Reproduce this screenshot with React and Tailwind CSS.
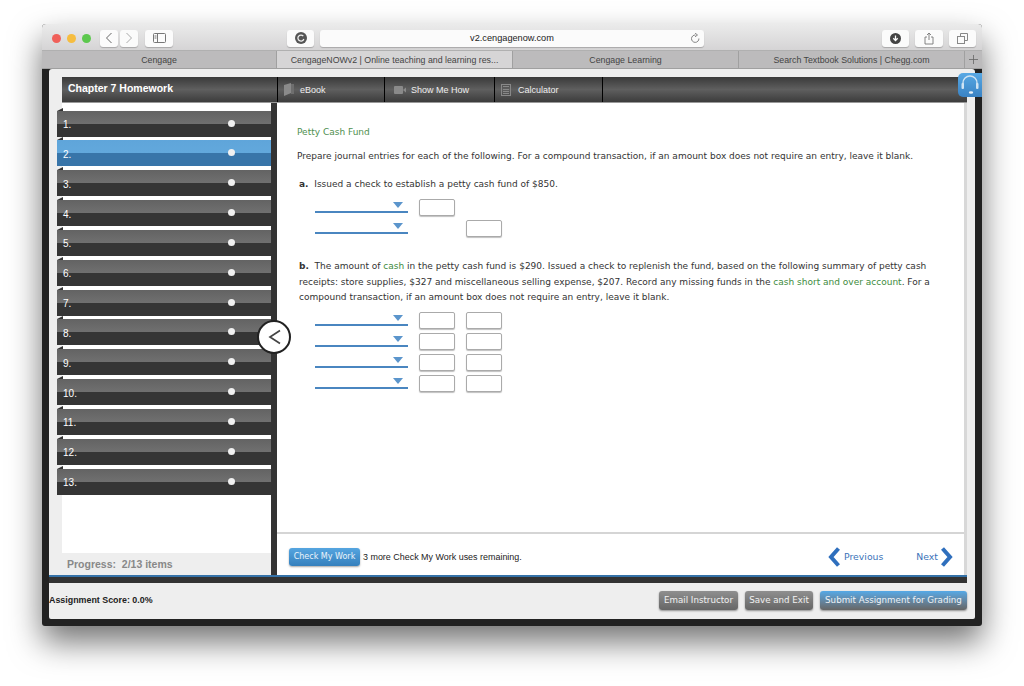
import React from "react";

const sans = "font-['Liberation_Sans',Arial,sans-serif]";
const verdana = "font-['DejaVu_Sans',Verdana,sans-serif]";

function ToolBtn({ w, className = "", children }) {
  return (
    <div className={`h-[17px] rounded-[3px] bg-[#fbfbfb] shadow-[0_1px_1px_rgba(0,0,0,0.22)] flex items-center justify-center ${w} ${className}`}>
      {children}
    </div>
  );
}

function Tab({ w, active, children, border = true }) {
  return (
    <div className={`${w} h-full flex items-center justify-center pt-[2px] text-[8.8px] text-[#444] ${sans} ${border ? "border-r border-[#a0a0a0]" : ""} ${active ? "bg-[#d6d5d6]" : "bg-[#bcbbbc]"}`}>
      {children}
    </div>
  );
}

function Row({ n, active }) {
  return (
    <div className="relative h-[26px] mb-[3.85px] mt-0 w-[214px]">
      <div className="absolute -top-[3px] left-0 w-0 h-0 border-b-[3px] border-b-[#333] border-l-[6px] border-l-transparent" />
      <div className={`h-[13px] bg-gradient-to-b ${active ? "from-[#5fa5da] to-[#62a8dc]" : "from-[#636363] to-[#707070]"}`} />
      <div className={`h-[13px] ${active ? "bg-[#3875a9]" : "bg-[#353535]"}`} />
      <div className="absolute inset-0 pl-[6px] pt-[7.5px] text-[10px] leading-[14px] text-white font-['Liberation_Sans',Arial,sans-serif]">{n}.</div>
      <div className="absolute left-[171px] top-[9px] w-[7px] h-[7px] rounded-full bg-[#f0f0f0]" />
    </div>
  );
}

function HeadTab({ w, icon, label }) {
  return (
    <div className={`${w} h-full flex items-center border-r border-black text-[9px] text-[#eee] ${sans}`}>
      {icon}
      <span className="pt-[2px]">{label}</span>
    </div>
  );
}

function Amount({ className = "" }) {
  return <div className={`w-[36px] h-[17px] rounded-[2px] border border-[#aaa] bg-white shadow-[0_1px_1px_rgba(0,0,0,0.25)] ${className}`} />;
}

function Select() {
  return (
    <div className="relative w-[93px] h-[14px] border-b-2 border-[#4a86c0]">
      <div className="absolute right-[5px] top-[3px] w-0 h-0 border-l-[5.5px] border-r-[5.5px] border-t-[6px] border-l-transparent border-r-transparent border-t-[#5b95cc]" />
    </div>
  );
}

function EntryRow({ first = true, second = true }) {
  return (
    <div className="flex h-[17px] mb-[4px] pl-[18px]">
      <Select />
      {first ? <Amount className="ml-[11px]" /> : <div className="w-[36px] ml-[11px]" />}
      {second ? <Amount className="ml-[11px]" /> : null}
    </div>
  );
}

function GrayBtn({ w, children, className = "" }) {
  return (
    <div className={`h-[19px] ${w} rounded-[3px] flex items-center justify-center pt-[1px] text-[8.7px] text-white/90 bg-gradient-to-b from-[#8f8f8f] to-[#666] shadow-[0_1px_2px_rgba(0,0,0,0.4)] ${verdana} ${className}`}>
      {children}
    </div>
  );
}

export default function App() {
  return (
    <div className="w-[1024px] h-[686px] bg-white overflow-hidden pt-[24px] pl-[42px] relative">
      <div className="w-[940px] h-[602px] rounded-t-[4px] rounded-b-[3px] flex flex-col shadow-[0_16px_32px_rgba(0,0,0,0.55)] relative bg-[#222]">
        {/* Title bar */}
        <div className="h-[27px] shrink-0 rounded-t-[4px] pt-[2px] bg-gradient-to-b from-[#ebebeb] to-[#d5d4d5] border-b border-[#b0b0b0] flex items-center relative">
          <div className="flex items-center gap-[6px] ml-[10px] w-[48px]">
            <div className="w-[9px] h-[9px] rounded-full bg-[#f0605a]" />
            <div className="w-[9px] h-[9px] rounded-full bg-[#f6bd3f]" />
            <div className="w-[9px] h-[9px] rounded-full bg-[#5cc84d]" />
          </div>
          <ToolBtn w="w-[18px]">
            <svg width="8" height="12" viewBox="0 0 8 12"><path d="M6.5 1 L1.5 6 L6.5 11" fill="none" stroke="#666" strokeWidth="1" /></svg>
          </ToolBtn>
          <ToolBtn w="w-[18px]" className="ml-[2px]">
            <svg width="8" height="12" viewBox="0 0 8 12"><path d="M1.5 1 L6.5 6 L1.5 11" fill="none" stroke="#aaa" strokeWidth="1" /></svg>
          </ToolBtn>
          <ToolBtn w="w-[28px]" className="ml-[7px]">
            <svg width="13" height="10" viewBox="0 0 13 10"><rect x="0.5" y="0.5" width="12" height="9" rx="1" fill="none" stroke="#777" /><path d="M4.5 0.5V9.5M1.5 3h2M1.5 5h2" stroke="#777" strokeWidth="1" /></svg>
          </ToolBtn>
          <ToolBtn w="w-[27px]" className="ml-[114px]">
            <div className="w-[12px] h-[12px] rounded-full bg-[#555] flex items-center justify-center">
              <svg width="8" height="8" viewBox="0 0 8 8"><path d="M6.3 2.2 A3 3 0 1 0 6.8 5" fill="none" stroke="#eee" strokeWidth="1.3" /></svg>
            </div>
          </ToolBtn>
          <ToolBtn w="w-[384px]" className={`ml-[6px] relative pt-[2px] text-[9.2px] text-[#222] ${sans}`}>
            <span>v2.cengagenow.com</span>
            <svg className="absolute right-[4px] top-[3px]" width="10" height="11" viewBox="0 0 10 11"><path d="M5.5 2 A3.7 3.7 0 1 0 8.9 5.5" fill="none" stroke="#777" strokeWidth="0.9" /><path d="M5 0 L7.5 2 L5 3.8" fill="none" stroke="#777" strokeWidth="0.9" /></svg>
          </ToolBtn>
          <ToolBtn w="w-[27px]" className="ml-[178px]">
            <div className="w-[11px] h-[11px] rounded-full bg-[#444] flex items-center justify-center">
              <svg width="7" height="7" viewBox="0 0 7 7"><path d="M3.5 0.5V5M1.3 3.2L3.5 5.6L5.7 3.2" fill="none" stroke="#fff" strokeWidth="1.3" /></svg>
            </div>
          </ToolBtn>
          <ToolBtn w="w-[28px]" className="ml-[6px]">
            <svg width="10" height="13" viewBox="0 0 10 13"><path d="M3 5H1V12H9V5H7M5 8V1M3 3L5 1L7 3" fill="none" stroke="#777" strokeWidth="0.9" /></svg>
          </ToolBtn>
          <ToolBtn w="w-[27px]" className="ml-[6px]">
            <svg width="11" height="11" viewBox="0 0 11 11"><rect x="0.5" y="3.5" width="7" height="7" fill="none" stroke="#888" /><path d="M3.5 3.5V0.5H10.5V7.5H7.5" fill="none" stroke="#888" /></svg>
          </ToolBtn>
        </div>

        {/* Browser tabs */}
        <div className="h-[18px] shrink-0 flex border-b border-[#a0a0a0]">
          <Tab w="w-[235px]">Cengage</Tab>
          <Tab w="w-[236px]" active>CengageNOWv2 | Online teaching and learning res...</Tab>
          <Tab w="w-[226px]">Cengage Learning</Tab>
          <Tab w="w-[226px]">Search Textbook Solutions | Chegg.com</Tab>
          <div className="flex-1 bg-[#bcbbbc] flex items-center justify-center">
            <svg width="9" height="9" viewBox="0 0 9 9"><path d="M4.5 0V9M0 4.5H9" stroke="#666" strokeWidth="0.8" /></svg>
          </div>
        </div>

        {/* Page */}
        <div className="flex-1 min-h-0 mx-[7px] mb-[7px] rounded-b-[2px] bg-[#eeeeee] flex flex-col rounded-t-[3px]">
          <div className="h-[8px] shrink-0" />
          {/* Assignment header */}
          <div className="h-[26px] shrink-0 ml-[13px] mr-[8px] flex bg-gradient-to-b from-[#3a3a3a] via-[#5f5f5f] to-[#3c3c3c] border-b border-[#999]">
            <div className={`w-[216px] h-full border-r border-black pl-[6px] pt-[4px] text-[10.5px] leading-[14px] font-bold text-white ${sans}`}>Chapter 7 Homework</div>
            <HeadTab
              w="w-[107px]"
              label="eBook"
              icon={
                <svg className="ml-[6px] mr-[6px]" width="10" height="13" viewBox="0 0 10 13"><path d="M0 2L7 0V10L0 13Z" fill="#8a8a8a" /><path d="M7 1H10V11L7 11Z" fill="#6e6e6e" /></svg>
              }
            />
            <HeadTab
              w="w-[110px]"
              label="Show Me How"
              icon={
                <svg className="ml-[9px] mr-[5px]" width="12" height="8" viewBox="0 0 12 8"><rect width="9" height="8" rx="1" fill="#8a8a8a" /><path d="M9 4L12 1.5V6.5Z" fill="#8a8a8a" /></svg>
              }
            />
            <HeadTab
              w="w-[108px]"
              label="Calculator"
              icon={
                <svg className="ml-[6px] mr-[7px]" width="10" height="12" viewBox="0 0 10 12"><rect x="0.5" y="0.5" width="9" height="11" fill="none" stroke="#888" /><path d="M2 2.5H8M2 5.5H8M2 7.5H8M2 9.5H8" stroke="#888" /></svg>
              }
            />
          </div>

          {/* Middle */}
          <div className="h-[472px] shrink-0 flex">
            {/* Sidebar */}
            <div className="w-[222px] shrink-0 relative flex flex-col">
              <div className="ml-[13px] flex-1 bg-white" />
              <div className={`h-[22px] shrink-0 pl-[18px] pt-[4px] text-[10.5px] leading-[14px] font-bold text-[#888] ${sans}`}>Progress:&nbsp; 2/13 items</div>
              <div className="absolute top-[7.5px] left-[8px] flex flex-col">
                {Array.from({ length: 13 }, (_, i) => (
                  <Row key={i} n={i + 1} active={i === 1} />
                ))}
              </div>
            </div>
            <div className="w-[6px] shrink-0 bg-[#333]" />
            {/* Content */}
            <div className="w-[690px] shrink-0 flex flex-col bg-white border-r-[3px] border-[#d8d8d8]">
              <div className={`h-[429px] shrink-0 pl-[20px] pr-[30px] text-[9px] text-[#333] ${verdana}`}>
                <div className="pt-[23px] h-[36px] leading-[13px] text-[#4f8f4f]">Petty Cash Fund</div>
                <div className="mt-[11px] leading-[13px]">Prepare journal entries for each of the following. For a compound transaction, if an amount box does not require an entry, leave it blank.</div>
                <div className="mt-[15px] leading-[13px] pl-[2px]"><b>a.</b>&nbsp; Issued a check to establish a petty cash fund of $850.</div>
                <div className="mt-[8px]">
                  <EntryRow second={false} />
                  <EntryRow first={false} />
                </div>
                <div className="mt-[22px] leading-[15.5px] pl-[2px] whitespace-nowrap">
                  <div><b>b.</b>&nbsp; The amount of <span className="text-[#3d8b3d]">cash</span> in the petty cash fund is $290. Issued a check to replenish the fund, based on the following summary of petty cash</div>
                  <div>receipts: store supplies, $327 and miscellaneous selling expense, $207. Record any missing funds in the <span className="text-[#3d8b3d]">cash short and over account</span>. For a</div>
                  <div>compound transaction, if an amount box does not require an entry, leave it blank.</div>
                </div>
                <div className="mt-[6px]">
                  <EntryRow />
                  <EntryRow />
                  <EntryRow />
                  <EntryRow />
                </div>
              </div>
              <div className="h-[2px] shrink-0 bg-[#d5d5d5]" />
              <div className="flex-1 flex items-start pl-[12px] pr-[11px] pt-[14px]">
                <div className={`w-[71px] h-[18px] rounded-[3px] bg-gradient-to-b from-[#55a5e0] to-[#3580bd] text-[8px] text-white/90 flex items-center justify-center shadow-[0_1px_2px_rgba(0,0,0,0.35)] ${verdana}`}>Check My Work</div>
                <div className={`ml-[3px] text-[8.95px] leading-[18px] text-[#222] ${sans}`}>3 more Check My Work uses remaining.</div>
                <div className="ml-auto flex items-center -mt-[1px] text-[#3b73b9] h-[20px]">
                  <svg width="13" height="20" viewBox="0 0 13 20"><path d="M10.5 1.5 L3 10 L10.5 18.5" fill="none" stroke="#2f6fbd" strokeWidth="4" /></svg>
                  <span className={`ml-[3px] text-[9.3px] ${verdana}`}>Previous</span>
                  <span className={`ml-[33px] text-[9.3px] ${verdana}`}>Next</span>
                  <svg className="ml-[2px]" width="13" height="20" viewBox="0 0 13 20"><path d="M2.5 1.5 L10 10 L2.5 18.5" fill="none" stroke="#2f6fbd" strokeWidth="4" /></svg>
                </div>
              </div>
            </div>
          </div>

          {/* Blue / dark line */}
          <div className="h-[2px] shrink-0 mr-[8px] bg-[#3572a8]" />
          <div className="h-[6px] shrink-0 mr-[8px] bg-[#333]" />

          {/* Bottom bar */}
          <div className="flex-1 flex items-center pr-[8px] pb-[1px]">
            <div className={`text-[8.9px] font-bold text-[#222] ${sans}`}>Assignment Score: 0.0%</div>
            <GrayBtn w="w-[79px]" className="ml-auto">Email Instructor</GrayBtn>
            <GrayBtn w="w-[68px]" className="ml-[7px]">Save and Exit</GrayBtn>
            <GrayBtn w="w-[147px]" className="ml-[7px] from-[#55a9e6] to-[#3a80bb]">Submit Assignment for Grading</GrayBtn>
          </div>
        </div>

        {/* Collapse circle */}
        <div className="absolute left-[215px] top-[296px] w-[34px] h-[34px] rounded-full bg-white border-2 border-[#222] flex items-center justify-center">
          <svg width="13" height="16" viewBox="0 0 13 16"><path d="M12 1.5 L2 8 L12 14.5" fill="none" stroke="#444" strokeWidth="1.7" /></svg>
        </div>
        {/* Headset badge */}
        <div className="absolute right-0 top-[49px] w-[24px] h-[24px] rounded-l-[5px] bg-gradient-to-b from-[#58a8e4] to-[#3a83c4] flex items-center justify-center overflow-hidden">
          <svg width="20" height="22" viewBox="0 0 20 22"><path d="M3 13V9A7 7 0 0 1 17 9V13" fill="none" stroke="#cfe3f3" strokeWidth="1.4" /><rect x="1.5" y="9" width="2.5" height="6" rx="1" fill="#cfe3f3" /><rect x="16" y="9" width="2.5" height="6" rx="1" fill="#cfe3f3" /><ellipse cx="11" cy="18.5" rx="2.2" ry="1.2" fill="#e6f0f8" /></svg>
        </div>
      </div>
    </div>
  );
}
